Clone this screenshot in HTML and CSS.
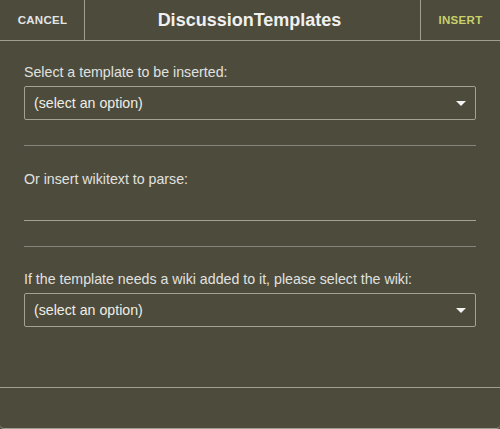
FILE: index.html
```html
<!DOCTYPE html>
<html>
<head>
<meta charset="utf-8">
<link rel="stylesheet" href="styles.css">
</head>
<body>
<div class="dialog">
  <div class="head">
    <div class="btn cancel">CANCEL</div>
    <div class="title">DiscussionTemplates</div>
    <div class="btn insert">INSERT</div>
  </div>
  <div class="body">
    <div class="field first">
      <div class="label">Select a template to be inserted:</div>
      <div class="select"><span>(select an option)</span>
        <svg class="arrow" width="10" height="6" viewBox="0 0 10 6"><path d="M0 0H10L5 5Z" fill="#f2f2f2"/></svg>
      </div>
    </div>
    <div class="rule"></div>
    <div class="field">
      <div class="label">Or insert wikitext to parse:</div>
      <div class="input"></div>
    </div>
    <div class="rule"></div>
    <div class="field last">
      <div class="label">If the template needs a wiki added to it, please select the wiki:</div>
      <div class="select"><span>(select an option)</span>
        <svg class="arrow" width="10" height="6" viewBox="0 0 10 6"><path d="M0 0H10L5 5Z" fill="#f2f2f2"/></svg>
      </div>
    </div>
  </div>
  <div class="foot"></div>
</div>
</body>
</html>
```
FILE: styles.css
```css
html, body { margin: 0; padding: 0; background: #4d4b3b; }
body { font-family: "Liberation Sans", Arial, sans-serif; }
.dialog {
  width: 500px; height: 429px; box-sizing: border-box;
  background: #4d4b3b;
  border-bottom: 1px solid #a09f92;
  border-radius: 0 0 4px 4px;
  display: flex; flex-direction: column;
}
.head {
  height: 40px; border-bottom: 1px solid #a09f92;
  display: flex; align-items: stretch;
}
.btn {
  width: 84px; display: flex; align-items: center; justify-content: center;
  font-size: 11.5px; font-weight: bold; letter-spacing: 0.3px;
}
.cancel { border-right: 1px solid #a09f92; color: #e2e5e8; padding-left: 1px; box-sizing: border-box; width: 85px; }
.insert { border-left: 1px solid #a09f92; color: #c8d16c; width: 80px; box-sizing: border-box; }
.title {
  flex: 1; display: flex; align-items: center; justify-content: center;
  font-size: 18px; font-weight: bold; color: #f0f0f0; padding-right: 6px;
}
.body { height: 346px; padding: 0 24px; box-sizing: border-box; }
.field { padding-top: 25px; }
.field.first { padding-top: 23px; }
.field.last { padding-top: 24px; }
.label { font-size: 14.2px; line-height: 16px; color: #e0e2e0; }
.select {
  margin-top: 6px; height: 34px; box-sizing: border-box;
  border: 1px solid #a3a295; border-radius: 2px;
  display: flex; align-items: center; justify-content: space-between;
  padding: 0 9px 0 9px; font-size: 14.2px; color: #eeeee8;
}
.arrow { margin-top: 1px; }
.input { margin-top: 6px; height: 28px; box-sizing: border-box; border-bottom: 1px solid #a3a295; }
.rule { margin-top: 25px; height: 1px; background: #85847c; }
.foot { flex: 1; border-top: 1px solid #a09f92; }
```
